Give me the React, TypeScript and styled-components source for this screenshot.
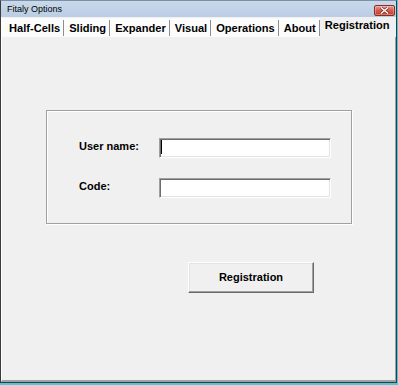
import React from 'react';
import styled, { createGlobalStyle } from 'styled-components';

const Global = createGlobalStyle`
  html, body { margin: 0; padding: 0; }
  body {
    background: #3fcde3;
    width: 398px;
    height: 385px;
    overflow: hidden;
    font-family: "Liberation Sans", Arial, sans-serif;
  }
`;

const Window = styled.div`
  width: 397px;
  height: 383px;
  box-sizing: border-box;
  border: 1px solid #3a3a3a;
  border-top-color: #7d8fa3;
  display: flex;
  flex-direction: column;
  background: #f0f0f0;
`;

const TitleBar = styled.div`
  height: 16px;
  flex: none;
  background: linear-gradient(#c9d9ec, #bacde3);
  display: flex;
  align-items: center;
  justify-content: space-between;
  padding: 0 1px 0 6px;
`;

const TitleText = styled.span`
  font-size: 9px;
  color: #000;
  line-height: 16px;
`;

const CloseButton = styled.div`
  width: 21px;
  height: 11px;
  box-sizing: border-box;
  margin-top: 3px;
  border: 1px solid #8c2b21;
  border-radius: 2px;
  background: linear-gradient(#e99b90, #d45a4c 50%, #c23d30);
  box-shadow: inset 0 0 0 1px rgba(255, 255, 255, 0.3);
  display: flex;
  align-items: center;
  justify-content: center;
`;

const Panel = styled.div`
  flex: 1;
  display: flex;
  flex-direction: column;
  border-left: 1px solid #ffffff;
  border-right: 1px solid #a0a0a0;
  border-bottom: 2px solid #a0a0a0;
`;

const TabStrip = styled.div`
  display: flex;
  align-items: flex-start;
  height: 20px;
  padding-top: 1px;
  box-sizing: border-box;
  flex: none;
`;

const Tab = styled.div<{ $active?: boolean; $first?: boolean }>`
  position: relative;
  font-size: 11.1px;
  font-weight: bold;
  color: #000;
  white-space: nowrap;
  padding: ${(p) => (p.$active ? '0 6px 4px 5px' : `0 4px 0 ${p.$first ? 7 : 5}px`)};
  line-height: ${(p) => (p.$active ? '16px' : '20px')};
  height: ${(p) => (p.$active ? '20px' : '19px')};
  box-sizing: border-box;
  margin-top: ${(p) => (p.$active ? '-1px' : '0')};
  background: ${(p) => (p.$active ? '#f0f0f0' : '#fcfcfc')};

  &::after {
    content: '';
    display: ${(p) => (p.$active ? 'none' : 'block')};
    position: absolute;
    right: 0;
    top: 2px;
    bottom: 1px;
    width: 1px;
    background: #8e8e8e;
  }
`;

const Content = styled.div`
  flex: 1;
  display: flex;
  flex-direction: column;
  align-items: flex-start;
`;

const GroupBox = styled.div`
  margin: 73px 0 0 44px;
  width: 306px;
  height: 114px;
  box-sizing: border-box;
  border: 1px solid #a0a0a0;
  box-shadow: inset 1px 1px #ffffff, 1px 1px #ffffff;
  padding: 27px 0 0 32px;
`;

const Form = styled.div`
  display: grid;
  grid-template-columns: 80px 172px;
  grid-auto-rows: 20px;
  row-gap: 20px;
`;

const Label = styled.label`
  font-size: 11px;
  font-weight: bold;
  color: #000;
  line-height: 17px;
`;

const Field = styled.div`
  height: 20px;
  box-sizing: border-box;
  background: #ffffff;
  border: 1px solid;
  border-color: #a0a0a0 #ffffff #ffffff #a0a0a0;
  box-shadow: inset 1px 1px #6d6d6d, inset -1px -1px #e3e3e3;
  display: flex;
  align-items: flex-start;
`;

const Caret = styled.span`
  width: 1px;
  height: 14px;
  margin: 1px 0 0 1px;
  background: #000;
`;

const Button = styled.button`
  margin: 38px 0 0 186px;
  width: 126px;
  height: 31px;
  box-sizing: border-box;
  background: #f0f0f0;
  border: 1px solid;
  border-color: #ffffff #696969 #696969 #ffffff;
  box-shadow: inset -1px -1px #a0a0a0, inset 1px 1px #e3e3e3;
  font-family: "Liberation Sans", Arial, sans-serif;
  font-size: 11px;
  font-weight: bold;
  color: #000;
  padding: 0;
  line-height: 29px;
`;

const tabs = ['Half-Cells', 'Sliding', 'Expander', 'Visual', 'Operations', 'About'];

export default function App() {
  return (
    <>
      <Global />
      <Window>
        <TitleBar>
          <TitleText>Fitaly Options</TitleText>
          <CloseButton>
            <svg width="9" height="7" viewBox="0 0 9 7">
              <path d="M1 0.5 L8 6.5 M8 0.5 L1 6.5" stroke="#6a1d15" strokeWidth="2.6" />
              <path d="M1 0.5 L8 6.5 M8 0.5 L1 6.5" stroke="#ffffff" strokeWidth="1.5" />
            </svg>
          </CloseButton>
        </TitleBar>
        <Panel>
          <TabStrip>
            {tabs.map((t, i) => (
              <Tab key={t} $first={i === 0}>
                {t}
              </Tab>
            ))}
            <Tab $active>Registration</Tab>
          </TabStrip>
          <Content>
            <GroupBox>
              <Form>
                <Label>User name:</Label>
                <Field>
                  <Caret />
                </Field>
                <Label>Code:</Label>
                <Field />
              </Form>
            </GroupBox>
            <Button>Registration</Button>
          </Content>
        </Panel>
      </Window>
    </>
  );
}
